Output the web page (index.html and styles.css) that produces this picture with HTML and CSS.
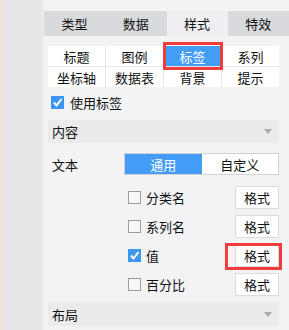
FILE: index.html
```html
<!DOCTYPE html>
<html lang="zh-CN">
<head>
    <meta charset="UTF-8">
    <meta name="viewport" content="width=device-width, initial-scale=1.0">
    <title>标签设置</title>
    <link rel="stylesheet" href="styles.css">
</head>
<body>
    <div class="page">
        <div class="edge"></div>
        <div class="side"></div>
        <div class="panel">
            <div class="tabs">
                <div class="tab">类型</div>
                <div class="tab">数据</div>
                <div class="tab active">样式</div>
                <div class="tab">特效</div>
            </div>

            <div class="subtabs">
                <div class="cell">标题</div>
                <div class="cell">图例</div>
                <div class="cell on marked">标签</div>
                <div class="cell">系列</div>
                <div class="cell">坐标轴</div>
                <div class="cell">数据表</div>
                <div class="cell">背景</div>
                <div class="cell">提示</div>
            </div>

            <div class="use">
                <span class="check checked"></span>
                <span>使用标签</span>
            </div>

            <div class="section">
                <span>内容</span>
                <span class="caret"></span>
            </div>

            <div class="text-row">
                <span class="label">文本</span>
                <div class="switch">
                    <div class="opt on">通用</div>
                    <div class="opt">自定义</div>
                </div>
            </div>

            <div class="items">
                <div class="item">
                    <span class="check"></span>
                    <span class="name">分类名</span>
                    <button class="fmt">格式</button>
                </div>
                <div class="item">
                    <span class="check"></span>
                    <span class="name">系列名</span>
                    <button class="fmt">格式</button>
                </div>
                <div class="item">
                    <span class="check checked"></span>
                    <span class="name">值</span>
                    <button class="fmt marked">格式</button>
                </div>
                <div class="item">
                    <span class="check"></span>
                    <span class="name">百分比</span>
                    <button class="fmt">格式</button>
                </div>
            </div>

            <div class="section last">
                <span>布局</span>
                <span class="caret"></span>
            </div>
        </div>
    </div>
</body>
</html>
```

FILE: styles.css
```css
body{
    margin: 0;
    font-family: "Noto Sans CJK SC", "Noto Sans", sans-serif;
    font-size: 13px;
    color: #111;
    background-color: #f3f3f5;
}
.page{
    display: flex;
    height: 330px;
    overflow: hidden;
}
.edge{
    width: 2px;
    background-color: #f1e6d8;
}
.side{
    width: 41px;
    background-color: #e7e7e7;
}
.panel{
    flex: 1;
    padding-top: 11px;
    background-color: #f3f3f5;
}

/* top tabs */
.tabs{
    display: grid;
    grid-template-columns: repeat(4, 1fr);
    height: 25px;
    margin-left: 1px;
    background-color: #d9dadd;
}
.tab{
    display: flex;
    align-items: center;
    justify-content: center;
}
.tab.active{
    background-color: #efeff1;
}

/* sub tabs */
.subtabs{
    display: grid;
    grid-template-columns: repeat(4, 1fr);
    grid-auto-rows: 20px;
    gap: 1px;
    margin: 10px 10px 0 5px;
    background-color: #e6e6e8;
}
.cell{
    display: flex;
    align-items: center;
    justify-content: center;
    background-color: #fff;
}
.cell.on{
    background-color: #439df7;
    color: #fff;
}
.marked{
    position: relative;
}
.cell.marked::after{
    content: "";
    position: absolute;
    left: -1px;
    right: -2px;
    top: -4px;
    bottom: -4px;
    border: 3px solid #f23b3b;
}

.check{
    width: 11px;
    height: 11px;
    border: 1px solid #9c9c9c;
    background-color: #f7f7f8;
    flex-shrink: 0;
}
.check.checked{
    width: 13px;
    height: 13px;
    border: 0;
    background-color: #3d96f0;
    background-image: url("data:image/svg+xml;utf8,<svg xmlns='http://www.w3.org/2000/svg' width='13' height='13'><path d='M3 6.5 L5.5 9.5 L10.5 3' fill='none' stroke='white' stroke-width='2'/></svg>");
}

.use{
    display: flex;
    align-items: center;
    gap: 6px;
    height: 22px;
    margin: 4px 0 0 8px;
}

.section{
    display: flex;
    align-items: center;
    justify-content: space-between;
    height: 23px;
    margin: 7px 10px 0 5px;
    padding: 0 7px 0 4px;
    background-color: #ebebeb;
}
.section.last{
    height: 24px;
    margin-top: 3px;
}
.caret{
    width: 0;
    height: 0;
    border-left: 4px solid transparent;
    border-right: 4px solid transparent;
    border-top: 5px solid #aaa;
}

.text-row{
    display: flex;
    align-items: center;
    height: 22px;
    margin: 10px 10px 0 9px;
}
.label{
    width: 72px;
}
.switch{
    flex: 1;
    display: flex;
    height: 20px;
    border: 1px solid #d2d2d4;
}
.opt{
    flex: 1;
    display: flex;
    align-items: center;
    justify-content: center;
    background-color: #fff;
}
.opt.on{
    background-color: #439df7;
    color: #fff;
}

.items{
    margin-top: 8px;
}
.item{
    display: flex;
    align-items: center;
    height: 29px;
    padding: 0 10px 0 85px;
}
.name{
    flex: 1;
    margin-left: 5px;
}
.fmt{
    width: 44px;
    height: 23px;
    padding: 0;
    font-family: inherit;
    font-size: 13px;
    color: #111;
    background-color: #fff;
    border: 1px solid #dcdcdc;
}
.fmt.marked::after{
    content: "";
    position: absolute;
    left: -11px;
    right: -4px;
    top: -2px;
    bottom: -4px;
    border: 3px solid #f23b3b;
}
```
